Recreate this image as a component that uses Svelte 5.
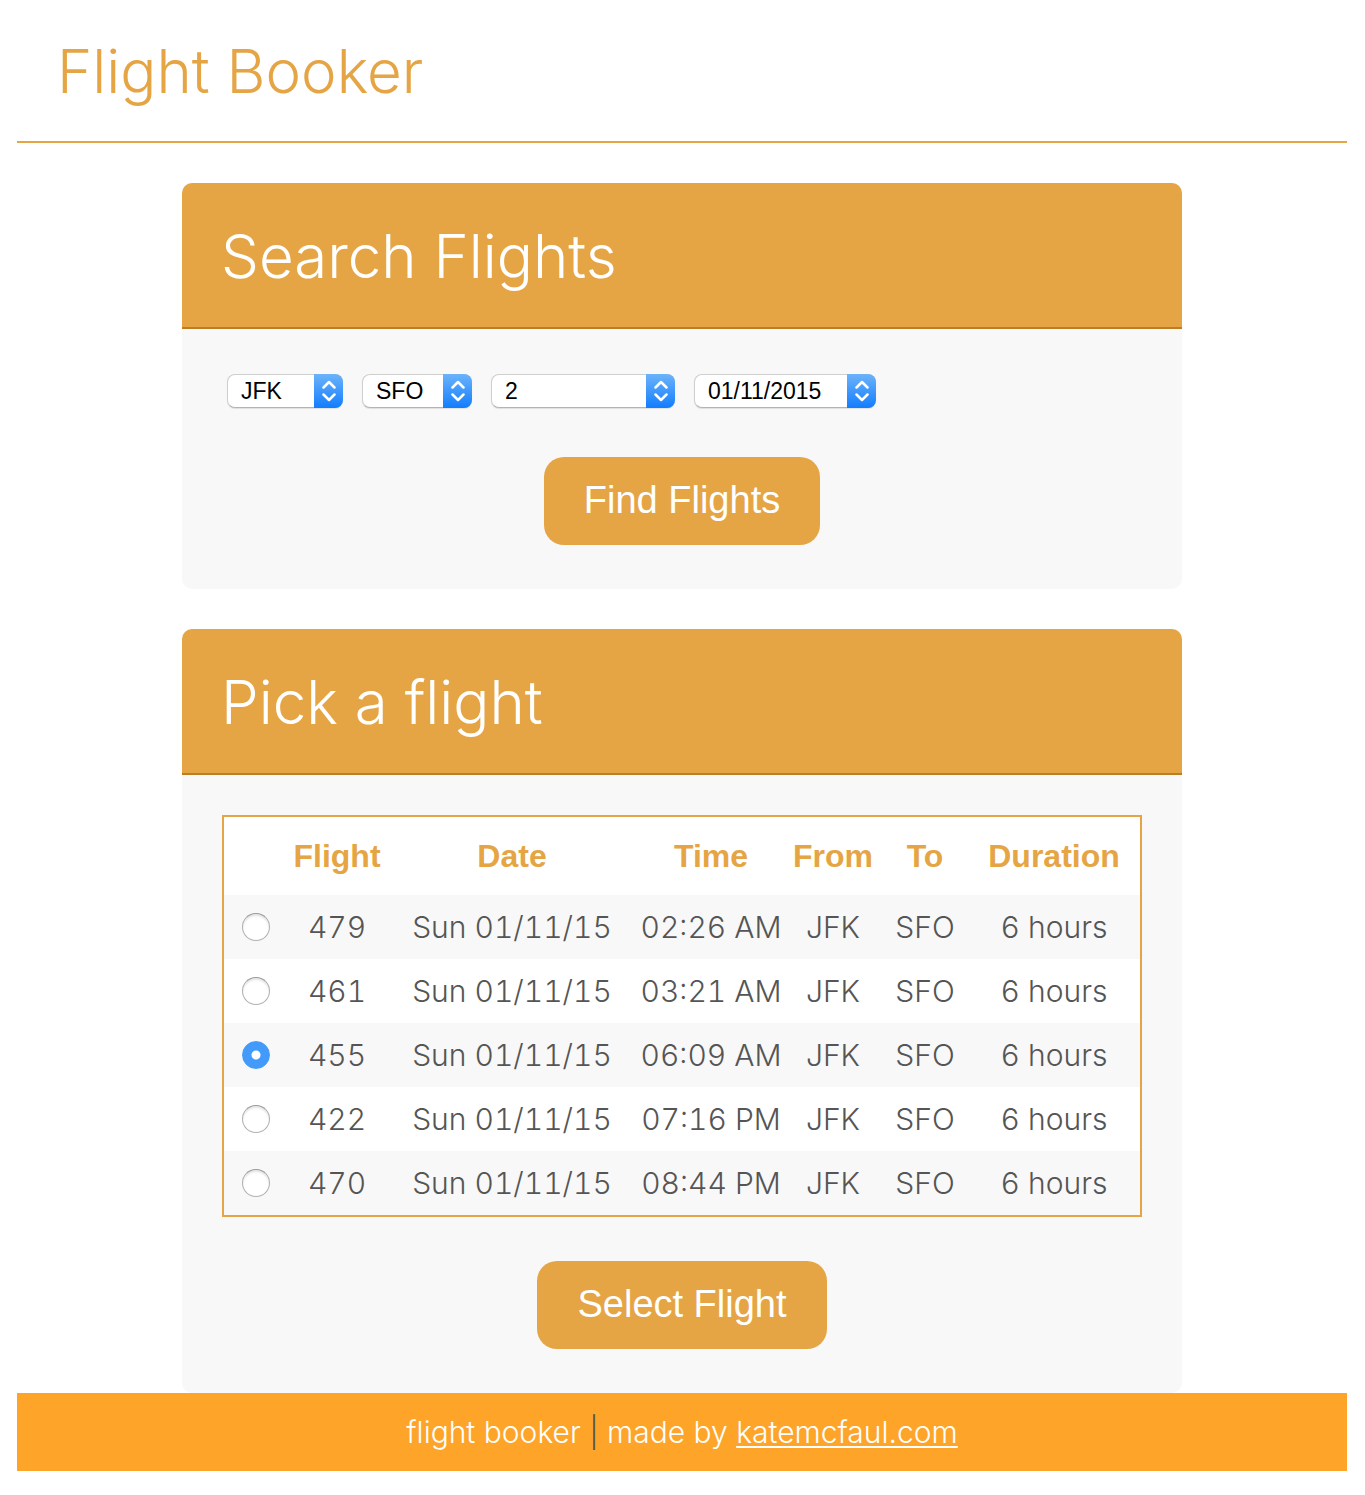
<script>
  const searchFields = [
    { id: 'from', label: 'From', size: 'origin', options: ['JFK', 'SFO'], value: 'JFK' },
    { id: 'to', label: 'To', size: 'destination', options: ['SFO', 'JFK'], value: 'SFO' },
    { id: 'passengers', label: 'Passengers', size: 'passengers', options: ['1', '2', '3', '4'], value: '2' },
    { id: 'date', label: 'Date', size: 'date', options: ['01/11/2015'], value: '01/11/2015' }
  ];

  const flights = [
    { number: '479', time: '02:26 AM' },
    { number: '461', time: '03:21 AM' },
    { number: '455', time: '06:09 AM' },
    { number: '422', time: '07:16 PM' },
    { number: '470', time: '08:44 PM' }
  ];

  let search = $state(Object.fromEntries(searchFields.map((f) => [f.id, f.value])));
  let selected = $state('455');
</script>

<div class="page">
  <header class="masthead">
    <h1>Flight Booker</h1>
  </header>

  <main>
    <section class="card">
      <h2>Search Flights</h2>
      <form class="card-body" onsubmit={(e) => e.preventDefault()}>
        <div class="fields">
          {#each searchFields as field}
            <div class="picker {field.size}">
              <select id={field.id} aria-label={field.label} bind:value={search[field.id]}>
                {#each field.options as option}
                  <option value={option}>{option}</option>
                {/each}
              </select>
              <span class="arrows" aria-hidden="true">
                <svg viewBox="0 0 14 22" width="14" height="22">
                  <path d="M1.500 7.500 7 2l5.500 5.500M1.500 14.500 7 20l5.500-5.500" />
                </svg>
              </span>
            </div>
          {/each}
        </div>
        <button type="submit">Find Flights</button>
      </form>
    </section>

    <section class="card">
      <h2>Pick a flight</h2>
      <form class="card-body results" onsubmit={(e) => e.preventDefault()}>
        <table>
          <colgroup>
            <col class="c-pick" />
            <col class="c-flight" />
            <col class="c-date" />
            <col class="c-time" />
            <col class="c-from" />
            <col class="c-to" />
            <col class="c-duration" />
          </colgroup>
          <thead>
            <tr>
              <th></th>
              <th scope="col">Flight</th>
              <th scope="col">Date</th>
              <th scope="col">Time</th>
              <th scope="col">From</th>
              <th scope="col">To</th>
              <th scope="col">Duration</th>
            </tr>
          </thead>
          <tbody>
            {#each flights as flight}
              <tr>
                <td>
                  <input
                    type="radio"
                    name="flight"
                    id="flight-{flight.number}"
                    value={flight.number}
                    bind:group={selected}
                  />
                </td>
                <td><label for="flight-{flight.number}">{flight.number}</label></td>
                <td>Sun 01/11/15</td>
                <td>{flight.time}</td>
                <td>JFK</td>
                <td>SFO</td>
                <td>6 hours</td>
              </tr>
            {/each}
          </tbody>
        </table>
        <button type="submit">Select Flight</button>
      </form>
    </section>
  </main>

  <footer>
    <span>flight booker</span> | <span>made by <a href="https://katemcfaul.com">katemcfaul.com</a></span>
  </footer>
</div>

<style>
  :global(body) {
    margin: 0;
    background: #fff;
  }

  .page {
    margin: 0 18px 24px 17px;
    color: #555;
    font-family: Inter, "Helvetica Neue", "Liberation Sans", sans-serif;
    font-size: 30px;
    font-weight: 300;
    line-height: 38px;
  }

  .masthead {
    padding: 31px 40px 30px;
    border-bottom: 2px solid #e5a544;
  }

  h1,
  h2 {
    margin: 0;
    font-size: 60px;
    font-weight: 300;
    line-height: 80px;
  }

  h1 {
    color: #e5a544;
  }

  main {
    display: flex;
    flex-direction: column;
    gap: 40px;
    max-width: 1000px;
    margin: 40px auto 0;
  }

  .card {
    overflow: hidden;
    border-radius: 10px;
    background: #f8f8f8;
  }

  h2 {
    padding: 33px 39px 31px;
    border-bottom: 2px solid #bd7e22;
    background: #e5a544;
    color: #fff;
  }

  .card-body {
    display: flex;
    flex-direction: column;
    align-items: center;
    gap: 49px;
    padding: 45px 40px 44px;
  }

  .results {
    gap: 44px;
    padding-top: 40px;
  }

  .fields {
    display: flex;
    flex-wrap: wrap;
    gap: 19px;
    align-self: stretch;
    padding-left: 5px;
  }

  .picker {
    position: relative;
    height: 34px;
  }

  .origin {
    width: 116px;
  }

  .destination {
    width: 110px;
  }

  .passengers {
    width: 184px;
  }

  .date {
    width: 182px;
  }

  select {
    display: block;
    width: 100%;
    height: 100%;
    padding: 0 30px 0 13px;
    border: 1px solid #cfcfcf;
    border-bottom-color: #b4b4b4;
    border-radius: 8px;
    appearance: none;
    background: #fff;
    box-shadow: 0 1px 1px rgba(0, 0, 0, 0.1);
    color: #000;
    font-family: "Liberation Sans", sans-serif;
    font-size: 23px;
  }

  .arrows {
    position: absolute;
    top: 0;
    right: 0;
    display: flex;
    align-items: center;
    justify-content: center;
    width: 29px;
    height: 100%;
    border-radius: 0 8px 8px 0;
    background: linear-gradient(#6cb3fa, #127dff);
    pointer-events: none;
  }

  .arrows path {
    fill: none;
    stroke: #fff;
    stroke-width: 2.5;
    stroke-linecap: round;
    stroke-linejoin: round;
  }

  button {
    padding: 20px 40px 22px;
    border: 0;
    border-radius: 20px;
    background: #e5a544;
    color: #fff;
    font-family: "Liberation Sans", sans-serif;
    font-size: 38px;
    font-weight: 400;
    line-height: 46px;
    cursor: pointer;
  }

  table {
    width: 100%;
    border: 2px solid #e5a544;
    border-spacing: 0;
    table-layout: fixed;
    background: #fff;
    font-variant-numeric: tabular-nums;
    text-align: center;
  }

  .c-pick {
    width: 64px;
  }

  .c-flight,
  .c-from {
    width: 98px;
  }

  .c-date {
    width: 252px;
  }

  .c-time {
    width: 146px;
  }

  .c-to {
    width: 86px;
  }

  .c-duration {
    width: 172px;
  }

  th,
  td {
    height: 64px;
    padding: 0;
    white-space: nowrap;
  }

  th {
    height: 78px;
    color: #e5a544;
    font-family: "Liberation Sans", sans-serif;
    font-size: 32px;
    font-weight: 700;
  }

  tbody tr:nth-child(odd) {
    background: #f8f8f8;
  }

  input {
    display: block;
    width: 28px;
    height: 28px;
    margin: 0 auto;
    border: 1px solid #b0b0b0;
    border-top-color: #999;
    border-radius: 50%;
    appearance: none;
    background: #fff;
    box-shadow: inset 0 2px 2px rgba(0, 0, 0, 0.1);
  }

  input:checked {
    border-color: #429bfa;
    background: radial-gradient(circle, #fff 0 4px, #429bfa 5px);
    box-shadow: none;
  }

  footer {
    padding: 20px;
    background: #fea429;
    text-align: center;
  }

  footer span,
  a {
    color: #fff;
  }

  a {
    text-decoration-thickness: 2px;
    text-underline-offset: 3px;
  }
</style>
